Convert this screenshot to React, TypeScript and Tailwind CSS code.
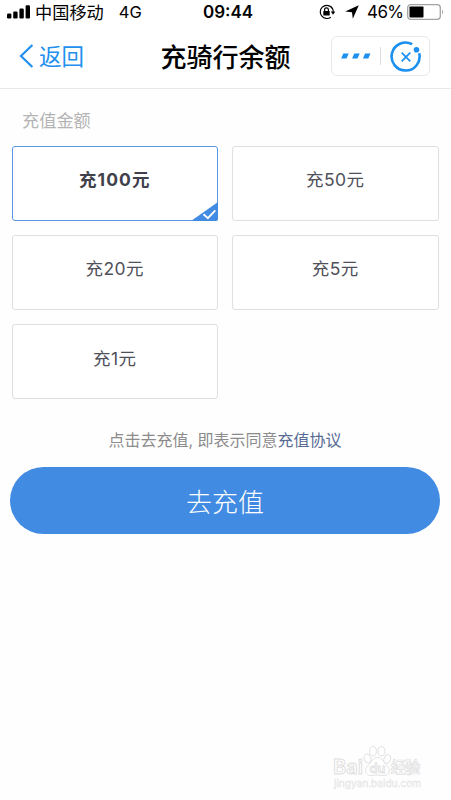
import { useState } from "react";
import clsx from "clsx";

const AMOUNTS = [100, 50, 20, 5, 1];

function StatusBar() {
  return (
    <div className="grid h-6 grid-cols-[203px_51px_1fr] grid-rows-[24px] items-center text-black">
      <div className="flex items-center pl-[7px]">
        <svg width="24" height="14" viewBox="0 0 24 14" fill="currentColor">
          <rect x="0" y="8.5" width="4.4" height="5" rx="1.2" />
          <rect x="6.2" y="6.5" width="4.4" height="7" rx="1.2" />
          <rect x="12.4" y="3.5" width="4.4" height="10" rx="1.2" />
          <rect x="18.6" y="0.2" width="4.4" height="13.3" rx="1.2" />
        </svg>
        <span className="ml-[4px] pt-px text-[17.2px] leading-[23px]">中国移动</span>
        <span className="ml-[15px] text-[16.5px] leading-6">4G</span>
      </div>
      <span className="whitespace-nowrap text-[17px] leading-6 font-semibold">09:44</span>
      <div className="flex items-center pl-[65px]">
        {/* Rotation lock */}
        <svg width="16" height="16" viewBox="0 0 16 16" fill="none" stroke="currentColor">
          <path d="M12.3 3A6.6 6.6 0 1 0 11.8 13.2" strokeWidth="1.2" />
          <path d="M12 2.8A6.6 6.6 0 0 1 14.1 8.5" strokeWidth="1.2" />
          <path d="M11.8 7.6H16.2L14 10.8Z" fill="currentColor" stroke="none" />
          <rect x="4.3" y="7" width="6.4" height="4.6" rx="0.6" fill="currentColor" stroke="none" />
          <path d="M5.6 7.3V5.8a1.9 1.9 0 0 1 3.8 0v1.5" strokeWidth="1.2" />
        </svg>
        <svg className="ml-[10px]" width="14" height="14" viewBox="0 0 14 14" fill="currentColor">
          <path d="M13.8 0.2L7.8 13.7L7 7.3L0.2 6.6Z" />
        </svg>
        <span className="ml-[8px] w-[35px] whitespace-nowrap text-[17px] leading-6 tracking-[-0.6px]">46%</span>
        <svg className="ml-[5px] -mt-px" width="38" height="16" viewBox="0 0 38 16" fill="none">
          <rect x="0.7" y="0.7" width="32.6" height="14.6" rx="3" stroke="#a3a3a3" strokeWidth="1.3" />
          <rect x="2.5" y="2.5" width="14" height="11" rx="0.8" fill="currentColor" />
          <path d="M35 5.4Q37 8 35 10.6Z" fill="#a3a3a3" />
        </svg>
      </div>
    </div>
  );
}

function NavBar() {
  return (
    <header className="grid h-[65px] grid-cols-[1fr_131px_1fr] items-center border-b border-[#e9e9e9]">
      <button className="flex items-center pl-[19px] text-[#2190ee]">
        <svg width="15" height="24" viewBox="0 0 15 24" fill="none" stroke="currentColor" strokeWidth="2.2">
          <path d="M13.4 1L2 12L13.4 23" />
        </svg>
        <span className="ml-[5px] pt-[2px] text-[22.5px] leading-[34px]">返回</span>
      </button>
      <h1 className="whitespace-nowrap pt-[4px] text-center text-[26px] leading-[38px] font-medium text-black">充骑行余额</h1>
      <div className="ml-auto mr-[21px] flex h-10 w-[99px] items-center rounded-[6px] border border-[#e8e8e8] text-[#1b90f0]">
        <svg className="ml-[9px]" width="30" height="6" viewBox="0 0 30 6" fill="currentColor">
          <path d="M2.3 0.4H7.7L5.5 5.4H0.1Z" />
          <path d="M13.3 0.4H18.7L16.5 5.4H11.1Z" />
          <path d="M24.1 0.4H29.5L27.3 5.4H21.9Z" />
        </svg>
        <span className="ml-[9px] h-[18px] w-px bg-[#dcdcdc]" />
        <svg className="mt-px ml-[8.5px]" width="32" height="32" viewBox="0 0 32 32" fill="none" stroke="currentColor">
          <path d="M22.2 3.2A14 14 0 1 0 29.2 12.2" strokeWidth="2.6" />
          <path d="M11.7 11.7L20.3 20.3M20.3 11.7L11.7 20.3" strokeWidth="1.7" />
          <circle cx="26.5" cy="8.7" r="2.8" fill="currentColor" stroke="none" />
        </svg>
      </div>
    </header>
  );
}

function AmountCard({ amount, selected, onSelect }: { amount: number; selected: boolean; onSelect: () => void }) {
  return (
    <button
      onClick={onSelect}
      className={clsx(
        "relative h-[75px] rounded-[3px] border bg-white pb-[6px] text-[17.5px] leading-6",
        selected
          ? "border-[#5797e6] font-bold tracking-[1.1px] text-[#41414c]"
          : "border-[#dfdfdf] tracking-[0.5px] text-[#50505a]"
      )}
    >
      充{amount}元
      {selected && (
        <svg className="absolute -right-px -bottom-px" width="27" height="19" viewBox="0 0 27 19">
          <path d="M27 0V16.5Q27 19 24.5 19H0Z" fill="#418be2" />
          <path d="M12.5 12.3L16.9 16.2L24.3 8.3" fill="none" stroke="#fff" strokeWidth="1.9" />
        </svg>
      )}
    </button>
  );
}

// Paw logo and wordmark in the bottom corner
function Watermark() {
  return (
    <svg
      className="absolute bottom-[7px] left-[331px]"
      width="96"
      height="50"
      viewBox="0 0 96 50"
      fill="#fff"
      stroke="#dedede"
      strokeWidth="0.9"
    >
      <ellipse cx="36.5" cy="15.5" rx="3.3" ry="4.6" transform="rotate(-15 36.5 15.5)" />
      <ellipse cx="42" cy="8.2" rx="3.4" ry="4.7" />
      <ellipse cx="50.5" cy="8.2" rx="3.4" ry="4.7" />
      <ellipse cx="56.2" cy="16" rx="3.2" ry="4.5" transform="rotate(15 56.2 16)" />
      <path d="M46.5 14.5C41.5 14.5 41 19 37 22.5C32.5 26.5 34.5 32.5 40 32.5C43 32.5 44 32 46.5 32C49 32 50 32.5 53 32.5C58.5 32.5 60 26.5 56 22.5C52 19 51.5 14.5 46.5 14.5Z" />
      <g fontFamily="Inter, sans-serif" fontWeight="600">
        <text x="2" y="30.5" fontSize="19.5" textLength="30" lengthAdjust="spacingAndGlyphs">
          Bai
        </text>
        <text x="38.5" y="29.5" fontSize="12.5" textLength="16" lengthAdjust="spacingAndGlyphs" strokeWidth="0.8">
          du
        </text>
      </g>
      <text x="59.5" y="30" fontSize="15.5" fontWeight="500" strokeWidth="0.7" textLength="30">
        经验
      </text>
      <text
        x="3"
        y="43.5"
        fontSize="10.5"
        fill="#ededed"
        stroke="#e3e3e3"
        strokeWidth="0.3"
        textLength="87"
        lengthAdjust="spacingAndGlyphs"
      >
        jingyan.baidu.com
      </text>
    </svg>
  );
}

export default function App() {
  const [selected, setSelected] = useState(100);

  return (
    <div className="relative flex h-[800px] w-[451px] flex-col overflow-hidden bg-white font-['Inter','Noto_Sans_CJK_SC',sans-serif]">
      <StatusBar />
      <NavBar />
      <main className="flex flex-1 flex-col bg-[#fefefe]">
        <h2 className="mt-[19px] pl-[22px] text-[17.2px] leading-[26px] text-[#b4b4b4]">充值金额</h2>
        <div className="mt-[11.5px] grid grid-cols-2 gap-x-[14px] gap-y-[14.3px] pr-[12.5px] pl-[11.5px]">
          {AMOUNTS.map((amount) => (
            <AmountCard
              key={amount}
              amount={amount}
              selected={amount === selected}
              onSelect={() => setSelected(amount)}
            />
          ))}
        </div>
        <p className="mt-[29px] pr-px text-center text-[16px] leading-6 text-[#8c8c8c]">
          点击去充值, 即表示同意<a className="text-[#576b95]">充值协议</a>
        </p>
        <button className="mr-[11px] ml-[10px] mt-[15px] h-[67px] rounded-full bg-[#418be2] pt-[5px] text-[26px] leading-[38px] font-light text-white">
          去充值
        </button>
      </main>
      <Watermark />
    </div>
  );
}
